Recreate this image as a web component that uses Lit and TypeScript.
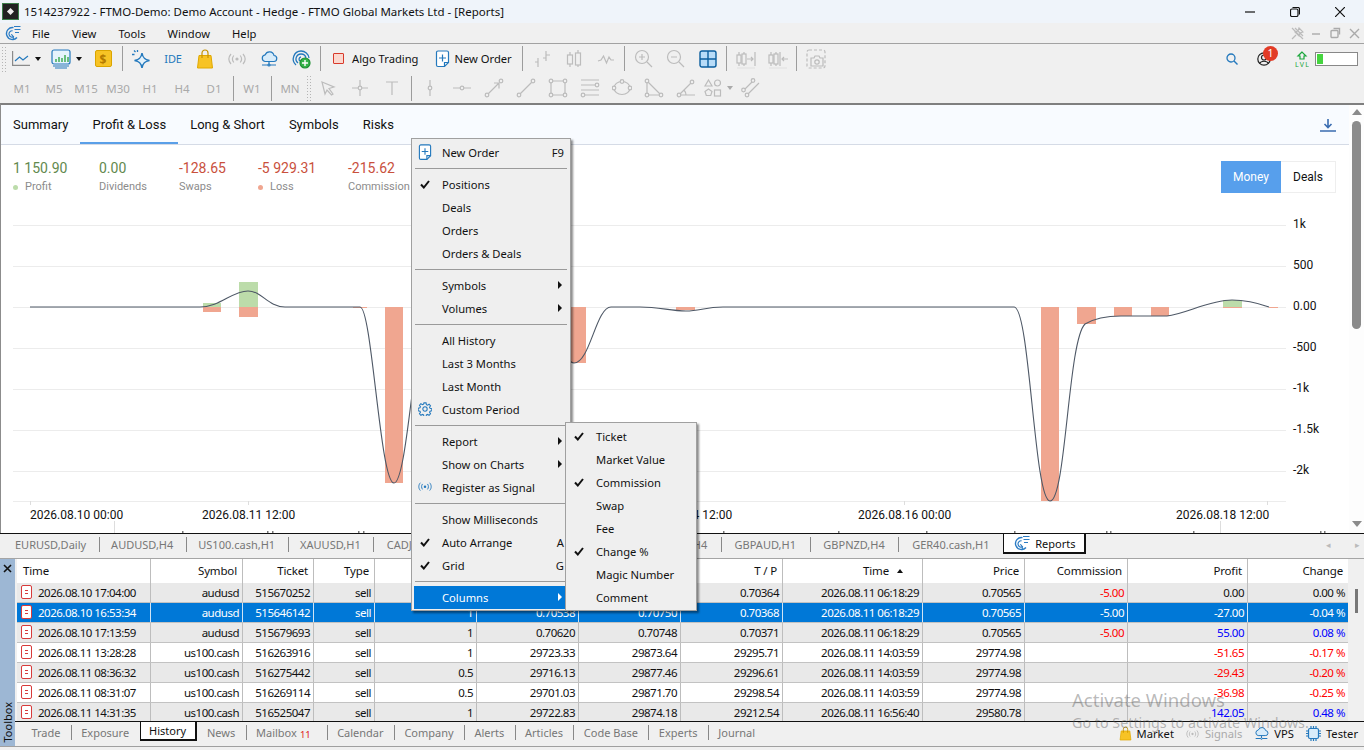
import { LitElement, css, html, svg } from "lit";
import { customElement } from "lit/decorators.js";

const BLUE = "#2479bd";
const GREY = "#bcbcbc";

const ico = (w: number, h: number, body: unknown) =>
  html`<svg width=${w} height=${h} viewBox="0 0 ${w} ${h}" fill="none" stroke-width="1.2">${body}</svg>`;

const logo = (s: number) => html`<svg width=${s} height=${s} viewBox="0 0 16 16" fill="none" stroke="#2b7cc4" stroke-width="1.4">
  <path d="M8.5 2.6A6 6 0 1 0 12 12.5"/><path d="M7.6 5.8A3.2 3.2 0 1 0 9 11.6" stroke-width="1.2"/>
  <path d="M6 9.5c2 .5 3 3 2 5.5" stroke-width="1.1"/><path d="M9 1.5h6.5M9.5 4.5h6M10 7.5h4" stroke-width="1.2"/></svg>`;

const newOrder = ico(15, 18, svg`<path d="M1.5 2.5a1.5 1.5 0 0 1 1.5-1.5h9a1.500 1.500 0 0 1 1.500 1.500v10l-4 4H3a1.500 1.500 0 0 1-1.500-1.500z" stroke=${BLUE} fill="#fff"/><path d="M9.500 16.500v-4h4" stroke=${BLUE}/><path d="M7.500 4.500v7M4 8h7" stroke=${BLUE}/>`);
const signal = (c: string) => ico(18, 12, svg`<circle cx="9" cy="6" r="1.600" fill=${c}/><path d="M5.800 2.500c-1.600 2-1.600 5 0 7M12.200 2.500c1.600 2 1.600 5 0 7M3 1c-2.600 3-2.600 7 0 10M15 1c2.600 3 2.600 7 0 10" stroke=${c}/>`);
const bag = (w: number, h: number) => html`<svg width=${w} height=${h} viewBox="0 0 18 20" fill="none"><path d="M3 6.500h12l1.500 12.500h-15z" fill="#f7c325" stroke="#e0a800"/><path d="M6 9V4a3 3 0 0 1 6 0v5" stroke="#c79200" stroke-width="1.200"/></svg>`;
const cloud = (w: number, h: number) => html`<svg width=${w} height=${h} viewBox="0 0 18 18" fill="none" stroke=${BLUE} stroke-width="1.200"><path d="M5 11.500h8.500a3 3 0 0 0 .5-6 4.600 4.600 0 0 0-8.800-.7A3.400 3.400 0 0 0 5 11.500z" fill="#d8ecfa"/><path d="M9 11.500v3.500M2 15h14"/><circle cx="9" cy="15" r="1" fill="#fff"/></svg>`;

const tb1: Record<string, unknown> = {
  spark: ico(20, 20, svg`<path d="M11 4c.8 5 2.700 6.800 7.500 7.500-4.800.7-6.700 2.500-7.500 7.500-.8-5-2.700-6.800-7.500-7.500C8.300 10.800 10.200 9 11 4z" stroke=${BLUE} stroke-width="1.500" fill="#e4f2fb"/><path d="M3 1.500l1.500 1.500M1 5.500h2.500M6.500 1v2" stroke=${BLUE} stroke-width="1.300"/>`),
  bag: bag(18, 20),
  radar: ico(20, 20, svg`<path d="M10 2a8 8 0 0 0-5 14M10 5a5 5 0 0 0-3 9M10 8a2.200 2.200 0 0 0-1 4" stroke=${BLUE} stroke-width="1.300"/><path d="M10 2a8 8 0 0 1 8 7M10 5a5 5 0 0 1 5 4" stroke=${BLUE} stroke-width="1.300"/><circle cx="14" cy="14" r="5" fill="#35b34a" stroke="#1e8f33"/><path d="M14 11v6M11 14h6" stroke="#fff" stroke-width="1.400"/>`),
  bars: ico(18, 18, svg`<path d="M5 8v9M2 12h3M13 1v10M13 5h4M10 8h3" stroke=${GREY}/>`),
  candles: ico(18, 20, svg`<path d="M5 3v15M13 1v17" stroke=${GREY}/><rect x="2.500" y="6" width="5" height="9" fill="#f0f0f0" stroke=${GREY}/><rect x="10.500" y="4" width="5" height="12" fill="#f0f0f0" stroke=${GREY}/>`),
  wave: ico(18, 12, svg`<path d="M1 8l3-1 2.500-4 3 7 2.500-6 2 3 3 0" stroke=${GREY}/>`),
  zoomIn: ico(19, 19, svg`<circle cx="8" cy="8" r="6.500" stroke=${GREY}/><path d="M8 5v6M5 8h6M13 13l5 5" stroke=${GREY}/>`),
  zoomOut: ico(19, 19, svg`<circle cx="8" cy="8" r="6.500" stroke=${GREY}/><path d="M5 8h6M13 13l5 5" stroke=${GREY}/>`),
  grid: ico(18, 18, svg`<rect x="1" y="1" width="16" height="16" rx="2" fill="#b8dcf8" stroke="#0b5e9e" stroke-width="1.400"/><path d="M9 1v16M1 9h16" stroke="#0b5e9e" stroke-width="1.400"/>`),
  shiftR: ico(20, 20, svg`<path d="M3 3v14M8 3v14" stroke=${GREY}/><rect x="1" y="6" width="4" height="8" fill="#f0f0f0" stroke=${GREY}/><rect x="6" y="5" width="4" height="10" fill="#f0f0f0" stroke=${GREY}/><path d="M11 10h6M15 8l2 2-2 2M19 3v14" stroke=${GREY}/><path d="M1 19h18" stroke="#e2e2e2"/>`),
  shiftL: ico(20, 20, svg`<path d="M3 3v14M8 3v14" stroke=${GREY}/><rect x="1" y="6" width="4" height="8" fill="#f0f0f0" stroke=${GREY}/><rect x="6" y="5" width="4" height="10" fill="#f0f0f0" stroke=${GREY}/><path d="M12 3v14M14 10h6M16 8l-2 2 2 2" stroke=${GREY}/><path d="M1 19h18" stroke="#e2e2e2"/>`),
  camera: ico(20, 20, svg`<rect x="1" y="1" width="18" height="18" rx="2" stroke=${GREY} stroke-dasharray="3 2"/><path d="M6 9h2l1-2h4l1 2h3v8H5V9z" fill="#f0f0f0" stroke=${GREY}/><circle cx="11" cy="13" r="2.200" stroke=${GREY}/>`),
};

const tb2: Record<string, unknown> = {
  cursor: ico(16, 16, svg`<path d="M2 2l12 5-5 1.500L13 14l-1.500 1L7 10l-2 4z" stroke=${GREY}/>`),
  cross: ico(18, 18, svg`<circle cx="9" cy="9" r="1.800" stroke=${GREY}/><path d="M9 1v6M9 11v6M1 9h6M11 9h6" stroke=${GREY}/>`),
  text: ico(14, 16, svg`<path d="M1 2h12M7 2v13" stroke=${GREY}/>`),
  vline: ico(8, 18, svg`<circle cx="4" cy="9" r="1.800" stroke=${GREY}/><path d="M4 1v6M4 11v6" stroke=${GREY}/>`),
  hline: ico(18, 8, svg`<circle cx="9" cy="4" r="1.800" stroke=${GREY}/><path d="M0 4h7M11 4h7" stroke=${GREY}/>`),
  arrow: ico(20, 20, svg`<circle cx="3" cy="17" r="1.800" stroke=${GREY}/><circle cx="17" cy="3" r="1.800" stroke=${GREY}/><path d="M4.500 15.500L15 5M10 5h5.500M15 5v5.500" stroke=${GREY}/>`),
  line: ico(20, 20, svg`<circle cx="3" cy="17" r="1.800" stroke=${GREY}/><circle cx="17" cy="3" r="1.800" stroke=${GREY}/><path d="M4.500 15.500L15.500 4.500" stroke=${GREY}/>`),
  rect: ico(20, 20, svg`<path d="M3 3h14v14H3z" stroke=${GREY}/><g fill="#f0f0f0" stroke=${GREY}><circle cx="3" cy="3" r="1.800"/><circle cx="17" cy="3" r="1.800"/><circle cx="3" cy="17" r="1.800"/><circle cx="17" cy="17" r="1.800"/></g>`),
  channel: ico(20, 20, svg`<path d="M1 2h18M1 7h14M1 12h18M5 17h14" stroke=${GREY}/><circle cx="17" cy="7" r="1.800" stroke=${GREY}/><circle cx="3" cy="17" r="1.800" stroke=${GREY}/>`),
  ellipse: ico(20, 18, svg`<ellipse cx="10" cy="9" rx="8" ry="6.500" stroke=${GREY}/><g fill="#f0f0f0" stroke=${GREY}><circle cx="10" cy="2.500" r="1.800"/><circle cx="2" cy="9" r="1.800"/><circle cx="18" cy="9" r="1.800"/></g>`),
  tri: ico(20, 20, svg`<path d="M3 3l14 14H3z" stroke=${GREY}/><g fill="#f0f0f0" stroke=${GREY}><circle cx="3" cy="3" r="1.800"/><circle cx="3" cy="17" r="1.800"/><circle cx="17" cy="17" r="1.800"/></g>`),
  angle: ico(20, 20, svg`<path d="M3 17L16 4M3 17h16M10 17c0-2-.7-3.500-2-5" stroke=${GREY}/><circle cx="3" cy="17" r="1.800" fill="#f0f0f0" stroke=${GREY}/><circle cx="16" cy="4" r="1.800" fill="#f0f0f0" stroke=${GREY}/>`),
  shapes: html`<span class="combo">${ico(18, 18, svg`<path d="M4.500 1l3.500 6H1z" stroke=${GREY}/><circle cx="13.500" cy="4" r="3" stroke=${GREY}/><path d="M4.500 10l3.500 2.500-1.300 4H2.300L1 12.500z" stroke=${GREY}/><rect x="10.500" y="11" width="6" height="6" stroke=${GREY}/>`)}<i class="caret dim"></i></span>`,
  parallel: ico(20, 20, svg`<path d="M4 12L14 2M7 17l12-12" stroke=${GREY}/><circle cx="3.500" cy="12" r="1.800" fill="#f0f0f0" stroke=${GREY}/><circle cx="13" cy="2.500" r="1.800" fill="#f0f0f0" stroke=${GREY}/><circle cx="7" cy="17" r="1.800" fill="#f0f0f0" stroke=${GREY}/>`),
};

const check = html`<svg class="chk" width="10" height="9" viewBox="0 0 10 9" fill="none"><path d="M1 4.500l2.800 3L9 1" stroke="#111" stroke-width="2"/></svg>`;

type MenuItem = { t: string; chk?: boolean; sub?: boolean; key?: string; icon?: unknown; active?: boolean } | null;

const gear = ico(16, 16, svg`<circle cx="8" cy="8" r="2.500" stroke=${BLUE}/><path d="M6.800 1h2.400l.4 2 1.300.6 1.800-1 1.600 1.700-1.100 1.700.6 1.300 2 .4v2.400l-2 .4-.6 1.300 1.100 1.700-1.600 1.700-1.800-1-1.300.6-.4 2H6.800l-.4-2-1.300-.6-1.800 1-1.600-1.700 1.100-1.700-.6-1.300-2-.4V7.100l2-.4.6-1.300-1.100-1.700 1.600-1.700 1.800 1 1.300-.6z" stroke=${BLUE}/>`);

const mainMenu: MenuItem[] = [
  { t: "New Order", key: "F9", icon: newOrder }, null,
  { t: "Positions", chk: true }, { t: "Deals" }, { t: "Orders" }, { t: "Orders & Deals" }, null,
  { t: "Symbols", sub: true }, { t: "Volumes", sub: true }, null,
  { t: "All History" }, { t: "Last 3 Months" }, { t: "Last Month" }, { t: "Custom Period", icon: gear }, null,
  { t: "Report", sub: true }, { t: "Show on Charts", sub: true }, { t: "Register as Signal", icon: signal(BLUE) }, null,
  { t: "Show Milliseconds" }, { t: "Auto Arrange", chk: true, key: "A" }, { t: "Grid", chk: true, key: "G" }, null,
  { t: "Columns", sub: true, active: true },
];

const subMenu: MenuItem[] = [
  { t: "Ticket", chk: true }, { t: "Market Value" }, { t: "Commission", chk: true }, { t: "Swap" },
  { t: "Fee" }, { t: "Change %", chk: true }, { t: "Magic Number" }, { t: "Comment" },
];

const header = ["Time", "Symbol", "Ticket", "Type", "Volume", "Price", "S / L", "T / P", "Time", "Price", "Commission", "Profit", "Change"];

type Row = { cells: string[]; tone?: string };
const rows: Row[] = [
  { cells: ["2026.08.10 17:04:00", "audusd", "515670252", "sell", "1", "0.70628", "0.70750", "0.70364", "2026.08.11 06:18:29", "0.70565", "-5.00", "0.00", "0.00 %"] },
  { cells: ["2026.08.10 16:53:34", "audusd", "515646142", "sell", "1", "0.70538", "0.70750", "0.70368", "2026.08.11 06:18:29", "0.70565", "-5.00", "-27.00", "-0.04 %"] },
  { cells: ["2026.08.10 17:13:59", "audusd", "515679693", "sell", "1", "0.70620", "0.70748", "0.70371", "2026.08.11 06:18:29", "0.70565", "-5.00", "55.00", "0.08 %"], tone: "pos" },
  { cells: ["2026.08.11 13:28:28", "us100.cash", "516263916", "sell", "1", "29723.33", "29873.64", "29295.71", "2026.08.11 14:03:59", "29774.98", "", "-51.65", "-0.17 %"], tone: "neg" },
  { cells: ["2026.08.11 08:36:32", "us100.cash", "516275442", "sell", "0.5", "29716.13", "29877.46", "29296.61", "2026.08.11 14:03:59", "29774.98", "", "-29.43", "-0.20 %"], tone: "neg" },
  { cells: ["2026.08.11 08:31:07", "us100.cash", "516269114", "sell", "0.5", "29701.03", "29871.70", "29298.54", "2026.08.11 14:03:59", "29774.98", "", "-36.98", "-0.25 %"], tone: "neg" },
  { cells: ["2026.08.11 14:31:35", "us100.cash", "516525047", "sell", "1", "29722.83", "29874.18", "29212.54", "2026.08.11 16:56:40", "29580.78", "", "142.05", "0.48 %"], tone: "pos" },
];

// bars in page coordinates: x, width, top of green, bottom of red
const bars = [
  [203, 18, 303, 312], [239, 19, 282, 317], [353, 14, 307, 308], [385, 18, 307, 483], [567, 19, 307, 363],
  [676, 19, 307, 310], [1041, 18, 307, 501], [1077, 19, 307, 324], [1114, 18, 307, 316], [1151, 18, 307, 316],
  [1223, 19, 300, 308], [1269, 9, 307, 308],
];

const gridY: [number, string][] = [[225, "1k"], [266, "500"], [307, "0.00"], [348, "-500"], [389, "-1k"], [430, "-1.5k"], [471, "-2k"]];
const xLabels: [number, string][] = [[30, "2026.08.10 00:00"], [202, "2026.08.11 12:00"], [530, "2026.08.13 00:00"], [639, "2026.08.14 12:00"], [858, "2026.08.16 00:00"], [1176, "2026.08.18 12:00"]];
const clipped = [182, 267, 272, 358, 363, 723, 838, 926, 1014, 1106, 1110, 1193, 1320, 1324];

const LINE = "M30 307L200 307C220 307 232 291 248 291C262 291 268 307 285 307L360 307C372 307 380 483 394 483C402 483 408 425 412 395L560 340C566 358 570 363 574 363C590 363 596 307 611 307L640 307C660 307 670 311 686 311C700 311 705 307 723 307L1014 307C1030 307 1034 501 1050 501C1066 501 1068 340 1085 324C1095 318 1105 316 1121 316L1167 316C1185 314 1210 300 1232 300C1245 300 1255 302 1269 307";

const chartTabs = ["EURUSD,Daily", "AUDUSD,H4", "US100.cash,H1", "XAUUSD,H1", "CADJPY,H1", "NZDUSD,H1", "USDCAD,H1", "GBPCAD,H4", "GBPAUD,H1", "GBPNZD,H4", "GER40.cash,H1"];
const toolTabs = ["Trade", "Exposure", "History", "News", "Mailbox", "Calendar", "Company", "Alerts", "Articles", "Code Base", "Experts", "Journal"];

@customElement("app-root")
export class AppRoot extends LitElement {
  static styles = css`
    :host {
      display: flex;
      flex-direction: column;
      position: relative;
      width: 1364px;
      height: 750px;
      overflow: hidden;
      background: #f0f0f0;
      font-family: "Noto Sans", sans-serif;
      font-size: 11.2px;
      color: #111;
    }
    svg { display: block; flex: none; }

    .title { height: 23px; background: #eff4fa; display: flex; align-items: center; padding-left: 2px; font-size: 11.5px; flex: none; }
    .title .app { width: 15px; height: 15px; background: #222; border: 1px solid #3c7d4a; display: grid; place-items: center; margin-right: 5px; }
    .title .app i { width: 5px; height: 5px; background: #eee; transform: rotate(45deg); }
    .winbtns { margin-left: auto; display: flex; gap: 35px; padding-right: 19px; align-items: center; }

    .menubar { height: 21px; box-sizing: border-box; flex: none; display: flex; align-items: center; border-bottom: 1px solid #a2a2a2; padding-left: 5px; }
    .menubar span { margin: 0 11px; }
    .menubar .mdi { margin-left: auto; display: flex; gap: 6px; padding-right: 3px; align-items: center; }

    .toolrow { height: 29.5px; flex: none; display: flex; align-items: center; padding-left: 1px; }
    .grip { width: 6px; height: 26px; flex: none; background-image: radial-gradient(#b5b5b5 0.7px, transparent 0.8px); background-size: 3px 3px; }
    .sep { width: 6px; height: 25px; flex: none; display: flex; justify-content: center; }
    .sep::after { content: ""; width: 1px; background: #9c9c9c; }
    .b { width: 32px; height: 26px; flex: none; display: flex; align-items: center; justify-content: center; }
    .combo { display: flex; align-items: center; gap: 5px; }
    .c1 { width: 38px; }
    .c2 { width: 42px; }
    .caret { display: block; width: 0; height: 0; border-left: 3.5px solid transparent; border-right: 3.5px solid transparent; border-top: 4px solid #111; }
    .caret.dim { border-top-color: #aaa; }
    .ide { color: #2479bd; font-size: 11px; letter-spacing: -0.2px; }
    .dollar { width: 17px; height: 17px; background: #f7c325; border: 1px solid #dba500; border-radius: 2px; display: grid; place-items: center; color: #b47a00; font-weight: 700; font-size: 12px; box-sizing: border-box; }
    .labeled { display: flex; align-items: center; padding: 0 8px; gap: 5px; height: 26px; flex: none; }
    .algo { width: 11px; height: 11px; background: #fbd8cf; border: 1px solid #d8392b; box-sizing: border-box; border-radius: 1px; flex: none; }
    .labeled.algo-btn { padding-left: 10px; gap: 8px; }
    .right { margin-left: auto; display: flex; align-items: center; padding-right: 6px; }
    .userwrap { position: relative; margin: 0 24px 0 19px; }
    .badge { position: absolute; left: 6px; top: -6px; width: 15px; height: 15px; border-radius: 50%; background: #e23b26; color: #fff; font-size: 10.5px; text-align: center; line-height: 15px; }
    .gauge { width: 40px; height: 12px; border: 1px solid #888; background: #fff; margin-left: 6px; padding: 0 0 0 1px; box-sizing: content-box; }
    .gauge i { display: block; width: 6px; height: 10px; margin-top: 1px; background: #45d43f; }
    .tf { color: #a9a9a9; font-size: 11.5px; }
    .first-tf { margin-left: 5px; }

    .content { flex: none; height: 430px; box-sizing: border-box; display: flex; background: #fff; border-top: 2px solid #7f7f7f; border-left: 1px solid #8c8c8c; }
    .report { width: 1348px; display: flex; flex-direction: column; font-family: Roboto, sans-serif; }
    .tabs { height: 39px; background: #f8fbff; border-bottom: 1px solid #d5dbe6; display: flex; align-items: stretch; font-size: 13px; box-sizing: content-box; flex: none; }
    .tab { padding: 0 12px; display: flex; align-items: center; }
    .tab.on { box-shadow: inset 0 -2px 0 #5a9fe8; }
    .dl { margin-left: auto; align-self: center; margin-right: 13px; }
    .stats { height: 55px; flex: none; display: flex; padding: 14px 13px 0 12px; box-sizing: border-box; }
    .stat { display: flex; flex-direction: column; gap: 3px; }
    .w-profit { width: 86px; }
    .w-div { width: 80px; }
    .w-swap { width: 79px; }
    .w-loss { width: 90px; }
    .stat b { font-weight: 400; font-size: 14px; line-height: 18px; }
    .stat small { font-size: 11px; color: #8b8b8b; display: flex; align-items: center; gap: 7px; line-height: 14px; }
    .stat small i { width: 5px; height: 5px; border-radius: 50%; }
    .dot-g { background: #bcdcaa; }
    .dot-r { background: #f0a690; }
    .green { color: #62894e; }
    .red { color: #c9503c; }
    .toggle { margin-left: auto; margin-top: 2px; display: flex; height: 32px; font-size: 12px; }
    .toggle span { display: grid; place-items: center; box-sizing: border-box; }
    .toggle .m { width: 60px; background: #579fec; color: #fff; }
    .toggle .d { width: 55px; border: 1px solid #eee; border-left: 0; }
    .scroll { flex: 1; display: flex; flex-direction: column; align-items: center; padding-top: 4px; background: #fdfdfd; }
    .scroll .thumb { width: 9px; height: 208px; margin-top: 6px; background: #8b8b8b; border-radius: 5px; }
    .up, .down { width: 0; height: 0; border-left: 5px solid transparent; border-right: 5px solid transparent; }
    .up { border-bottom: 6px solid #8b8b8b; }
    .down { border-top: 6px solid #8b8b8b; margin-top: auto; margin-bottom: 6px; }
    .chart text { font-family: Roboto, sans-serif; font-size: 12px; fill: #111; }

    .strip { display: flex; align-items: flex-start; border-top: 1px solid #111; color: #777; flex: none; font-size: 11px; box-sizing: border-box; }
    .strip .it { display: flex; align-items: center; height: 20px; padding: 0 12.5px; position: relative; white-space: nowrap; }
    .strip .it + .it::before { content: ""; position: absolute; left: 0; top: 3px; bottom: 2px; width: 1px; background: #888; }
    .strip .it.on { background: #fff; color: #111; border: 1px solid #111; border-top: 0; border-right-width: 2px; border-bottom-width: 2px; box-sizing: border-box; }
    .strip .it.on::before, .strip .it.on + .it::before { display: none; }
    .charttabs { height: 26px; border-bottom: 1px solid #a5a5a5; padding-left: 2.5px; }
    .charttabs .it:nth-child(n+5) { padding: 0 13.7px; }
    .charttabs .it.on { padding: 0 10px; gap: 5px; width: 83px; }
    .nav { margin-left: auto; display: flex; gap: 24px; align-items: center; height: 20px; padding-right: 4px; color: #bbb; font-size: 9px; }

    .dock { flex: none; height: 188px; box-sizing: border-box; display: flex; border-bottom: 1px solid #a0a0a0; }
    .toolbox { width: 15px; background: #9db7d4; display: flex; flex-direction: column; align-items: center; justify-content: space-between; padding: 5px 0 3px; box-sizing: border-box; flex: none; }
    .toolbox span { writing-mode: vertical-rl; transform: rotate(180deg); font-size: 11px; color: #111; }
    .dockmain { flex: 1; display: flex; flex-direction: column; min-width: 0; }
    .tablewrap { height: 162px; display: flex; padding-left: 2px; flex: none; }
    .table { width: 1331px; height: 162px; overflow: hidden; background: #fff; }
    .row { display: grid; grid-template-columns: 134px 92px 71px 61px 102px 102px 102px 102px 140px 102px 103px 120px 101px; height: 20px; box-sizing: border-box; border-bottom: 1px solid #c2c2c2; background: #fff; }
    .row:nth-child(even) { background: #e9e9e9; }
    .row.head { height: 24px; background: #fff; border-bottom: 0; }
    .row.head .cell { padding-right: 5px; font-size: 11.5px; letter-spacing: -0.15px; }
    .row.sel { background: #0078d7; color: #fff; }
    .cell { display: flex; align-items: center; justify-content: flex-end; padding-right: 3px; padding-bottom: 1px; border-right: 1px solid #bdbdbd; font-size: 11.5px; letter-spacing: -0.5px; white-space: nowrap; min-width: 0; overflow: hidden; }
    .row.sel .cell { border-right-color: #d0e4f5; }
    .cell.first { justify-content: flex-start; padding-left: 4px; gap: 6px; }
    .row.head .cell.first { padding-left: 6px; }
    .cell.sorted { gap: 8px; }
    .sortup { width: 0; height: 0; border-left: 3.5px solid transparent; border-right: 3.5px solid transparent; border-bottom: 4px solid #111; }
    .sortgap { width: 6px; }
    .doc { width: 11px; height: 14px; box-sizing: border-box; border: 1px solid #d83a3a; border-radius: 2px; background: #fff; display: flex; flex-direction: column; align-items: center; justify-content: center; gap: 2px; flex: none; }
    .doc i { width: 3px; height: 1px; background: #d83a3a; }
    .pos .t-p { color: #0000ff; }
    .neg .t-p { color: #ff0000; }
    .t-c { color: #ff0000; }
    .row.sel .t-c, .row.sel .t-p { color: #fff; }
    .tscroll { flex: 1; }
    .tscroll i { display: block; width: 3px; height: 24px; background: #777; margin: 30px 0 0 7px; }

    .tooltabs { height: 25px; padding-left: 6px; }
    .tooltabs .it { padding: 0 10.4px; }
    .tooltabs .it.on { height: 19px; padding: 0 8.5px; }
    .mail { color: #e02020; font-size: 9.5px; margin: 4px 0 0 3px; align-self: center; }
    .tooltabs .it:has(.mail) { padding-right: 16px; }
    .status { margin-left: auto; display: flex; align-items: center; height: 23px; color: #111; font-size: 11.2px; }
    .status span { display: flex; align-items: center; gap: 5px; margin-right: 12px; }
    .status span:first-child { margin-right: 12px; }
    .status span:last-child { margin-right: 6px; }
    .status .off { color: #aaa; gap: 6px; }
    .status .off svg { width: 13px; }
    .bottom { flex: 1; }

    .menu { position: absolute; background: #efefef; border: 1px solid #a0a0a0; box-shadow: 2px 2px 2px rgba(0,0,0,0.45); padding: 2px; box-sizing: border-box; font-size: 11.2px; }
    .menu.main { left: 411px; top: 138px; width: 160px; height: 473px; }
    .menu.sub { left: 565px; top: 422px; width: 132px; height: 189px; }
    .mi { height: 23px; box-sizing: border-box; padding-bottom: 1px; display: flex; align-items: center; }
    .mi .mark { width: 22px; margin-right: 6px; flex: none; display: flex; justify-content: center; }
    .mi .mark svg { max-width: 14px; height: auto; }
    .mi .lbl { flex: 1; }
    .mi .key { margin-right: 4px; }
    .mi .arr { width: 0; height: 0; border-top: 4px solid transparent; border-bottom: 4px solid transparent; border-left: 4px solid #111; margin-right: 6px; }
    .mi.act { background: #0078d7; color: #fff; }
    .mi.act .arr { border-left-color: #fff; }
    .ms { height: 9px; display: flex; align-items: center; padding: 0 1px; }
    .ms::after { content: ""; flex: 1; height: 1px; background: #9a9a9a; }

    .wm { position: absolute; left: 1072px; top: 688px; color: rgba(90,90,90,0.42); pointer-events: none; }
    .wm b { display: block; font-weight: 400; font-size: 18.5px; line-height: 24px; }
    .wm span { display: block; font-size: 14.3px; line-height: 22px; }
  `;

  private menuItems(items: MenuItem[]) {
    return items.map((m) =>
      m === null
        ? html`<div class="ms"></div>`
        : html`<div class="mi ${m.active ? "act" : ""}">
            <span class="mark">${m.chk ? check : m.icon ?? ""}</span>
            <span class="lbl">${m.t}</span>
            ${m.key ? html`<span class="key">${m.key}</span>` : ""}
            ${m.sub ? html`<i class="arr"></i>` : ""}
          </div>`
    );
  }

  private toolbars() {
    const b = (x: unknown) => html`<div class="b">${x}</div>`;
    const sep = html`<div class="sep"></div>`;
    const tf = (t: string) => html`<div class="b tf">${t}</div>`;
    return html`
      <div class="toolrow">
        <div class="grip"></div>
        <div class="b c1"><span class="combo">${ico(18, 15, svg`<path d="M.6 0v14.400H18" stroke="#8a8a8a"/><path d="M3 10l4.500-4 3.500 3 5-4" stroke=${BLUE}/>`)}<i class="caret"></i></span></div>
        <div class="b c2"><span class="combo">${ico(20, 20, svg`<rect x="1" y="1" width="18" height="14" rx="2" fill="#e6f3fc" stroke=${BLUE}/><path d="M2 17h16M4 19h12" stroke=${BLUE}/><path d="M5 13v-3M8 13V8M11 13v-4M14 13V6M17 13V8" stroke="#35a84a" stroke-width="1.400"/>`)}<i class="caret"></i></span></div>
        ${b(html`<div class="dollar">$</div>`)}
        ${sep}
        ${b(tb1.spark)}
        <div class="b ide">IDE</div>
        ${b(tb1.bag)}
        ${b(signal(GREY))}
        ${b(cloud(18, 18))}
        ${b(tb1.radar)}
        ${sep}
        <div class="labeled algo-btn"><i class="algo"></i><span>Algo Trading</span></div>
        <div class="labeled">${newOrder}<span>New Order</span></div>
        ${sep}
        ${b(tb1.bars)}${b(tb1.candles)}${b(tb1.wave)}
        ${sep}
        ${b(tb1.zoomIn)}${b(tb1.zoomOut)}${b(tb1.grid)}
        ${sep}
        ${b(tb1.shiftR)}${b(tb1.shiftL)}
        ${sep}
        ${b(tb1.camera)}
        <div class="right">
          ${ico(12, 12, svg`<circle cx="5" cy="5" r="4" stroke=${BLUE} stroke-width="1.300"/><path d="M8 8l3.500 3.500" stroke=${BLUE} stroke-width="1.400"/>`)}
          <div class="userwrap">
            ${ico(14, 14, svg`<circle cx="7" cy="7" r="6.200" stroke="#222"/><circle cx="7" cy="5.500" r="2.500" stroke="#222"/><path d="M2.500 11.500c1.500-3 7.500-3 9 0" stroke="#222"/>`)}
            <span class="badge">1</span>
          </div>
          <svg width="14" height="16" viewBox="0 0 14 16" fill="none"><path d="M7 1L3 5h2v3h4V5h2z" stroke="#19a63a" stroke-width="1.200"/><text x="0" y="15.500" font-size="7" font-family="Noto Sans" fill="#19a63a" textLength="14">LVL</text></svg>
          <div class="gauge"><i></i></div>
        </div>
      </div>
      <div class="toolrow">
        <div class="b tf first-tf">M1</div>${tf("M5")}${tf("M15")}${tf("M30")}${tf("H1")}${tf("H4")}${tf("D1")}
        ${sep}${tf("W1")}${sep}${tf("MN")}
        <div class="grip"></div>
        ${b(tb2.cursor)}${b(tb2.cross)}${b(tb2.text)}
        ${sep}
        ${b(tb2.vline)}${b(tb2.hline)}${b(tb2.arrow)}${b(tb2.line)}${b(tb2.rect)}${b(tb2.channel)}${b(tb2.ellipse)}${b(tb2.tri)}${b(tb2.angle)}${b(tb2.shapes)}${b(tb2.parallel)}
      </div>`;
  }

  private chart() {
    return html`<svg class="chart" width="1348" height="333" viewBox="1 200 1348 333">
      ${gridY.map(([y]) => svg`<path d="M13 ${y + 0.5}H1286" stroke="#ececec"/>`)}
      <path d="M13 501.5H1286" stroke="#ececec"/>
      ${gridY.map(([y, t]) => svg`<text x="1293" y=${y + 3}>${t}</text>`)}
      ${bars.map(([x, w, top, bot]) => svg`
        <rect x=${x} y="307" width=${w} height=${bot - 307} fill="#f0a690"/>
        ${top < 307 ? svg`<rect x=${x} y=${top} width=${w} height=${307 - top} fill="#bcdcaa"/>` : ""}`)}
      <path d=${LINE} stroke="#4e5866" stroke-width="1.1" fill="none"/>
      ${[30, 248, 904, 1267].map((x) => svg`<path d="M${x + 0.5} 501V505" stroke="#ddd"/>`)}
      ${[114, 1220].map((x) => svg`<path d="M${x + 0.5} 521V533" stroke="#ddd"/>`)}
      ${xLabels.map(([x, t]) => svg`<text x=${x} y="519">${t}</text>`)}
      ${clipped.map((x) => svg`<rect x=${x} y="531" width="1.5" height="2" fill="#777"/>`)}
    </svg>`;
  }

  private table() {
    return html`<div class="table">
      <div class="row head">
        ${header.map((h, i) => html`<div class="cell ${i === 0 ? "first" : ""} ${i === 8 ? "sorted" : ""}">${h}${i === 8 ? html`<i class="sortup"></i><span class="sortgap"></span>` : ""}</div>`)}
      </div>
      ${rows.map((r, ri) => html`<div class="row ${r.tone ?? ""} ${ri === 1 ? "sel" : ""}">
        ${r.cells.map((c, i) => html`<div class="cell ${i === 0 ? "first" : ""} ${i === 10 ? "t-c" : ""} ${i >= 11 ? "t-p" : ""}">${i === 0 ? html`<span class="doc"><i></i><i></i></span>` : ""}${c}</div>`)}
      </div>`)}
    </div>`;
  }

  render() {
    return html`
      <div class="title">
        <div class="app"><i></i></div>
        <span>1514237922 - FTMO-Demo: Demo Account - Hedge - FTMO Global Markets Ltd - [Reports]</span>
        <div class="winbtns">
          ${ico(10, 10, svg`<path d="M0 5h10" stroke="#111"/>`)}
          ${ico(10, 10, svg`<rect x=".5" y="2" width="7.5" height="7.5" rx="1.5" stroke="#111"/><path d="M2.500 .5h5.500a1.500 1.500 0 0 1 1.500 1.500v5.500" stroke="#111"/>`)}
          ${ico(10, 10, svg`<path d="M0 0l10 10M10 0L0 10" stroke="#111"/>`)}
        </div>
      </div>
      <div class="menubar">
        ${logo(16)}
        <span>File</span><span>View</span><span>Tools</span><span>Window</span><span>Help</span>
        <div class="mdi">
          ${ico(13, 13, svg`<path d="M4 1l8 8M8 1l4 4-3 1-1 3-4-4 3-1zM5 8l-4 4M1 1l11 11" stroke="#bbb"/>`)}
          ${ico(13, 13, svg`<path d="M2 7h8" stroke="#aaa" stroke-width="1.4"/>`)}
          ${ico(13, 13, svg`<rect x="2" y="3.5" width="7" height="7" rx="1" stroke="#aaa" stroke-width="1.4"/><path d="M4.500 1.500h6v6" stroke="#aaa" stroke-width="1.4"/>`)}
          ${ico(13, 13, svg`<path d="M2 2l9 9M11 2l-9 9" stroke="#aaa" stroke-width="1.4"/>`)}
        </div>
      </div>
      ${this.toolbars()}
      <div class="content">
        <div class="report">
          <div class="tabs">
            <div class="tab">Summary</div><div class="tab on">Profit &amp; Loss</div><div class="tab">Long &amp; Short</div><div class="tab">Symbols</div><div class="tab">Risks</div>
            <div class="dl">${ico(16, 14, svg`<path d="M8 1v8M4.500 6L8 9.500 11.500 6M0 13h16" stroke="#3a6cb0" stroke-width="1.6"/>`)}</div>
          </div>
          <div class="stats">
            <div class="stat w-profit"><b class="green">1 150.90</b><small><i class="dot-g"></i>Profit</small></div>
            <div class="stat w-div"><b class="green">0.00</b><small>Dividends</small></div>
            <div class="stat w-swap"><b class="red">-128.65</b><small>Swaps</small></div>
            <div class="stat w-loss"><b class="red">-5 929.31</b><small><i class="dot-r"></i>Loss</small></div>
            <div class="stat"><b class="red">-215.62</b><small>Commission</small></div>
            <div class="toggle"><span class="m">Money</span><span class="d">Deals</span></div>
          </div>
          ${this.chart()}
        </div>
        <div class="scroll"><i class="up"></i><i class="thumb"></i><i class="down"></i></div>
      </div>
      <div class="strip charttabs">
        ${chartTabs.map((t) => html`<div class="it">${t}</div>`)}
        <div class="it on">${logo(16)}<span>Reports</span></div>
        <div class="nav"><span>◂</span><span>▸</span></div>
      </div>
      <div class="dock">
        <div class="toolbox">
          ${ico(9, 9, svg`<path d="M1 1l7 7M8 1L1 8" stroke="#111" stroke-width="1.6"/>`)}
          <span>Toolbox</span>
        </div>
        <div class="dockmain">
          <div class="tablewrap">${this.table()}<div class="tscroll"><i></i></div></div>
          <div class="strip tooltabs">
            ${toolTabs.map((t) => html`<div class="it ${t === "History" ? "on" : ""}">${t}${t === "Mailbox" ? html`<span class="mail">11</span>` : ""}</div>`)}
            <div class="status">
              <span>${bag(13, 15)}Market</span>
              <span class="off">${signal("#bbb")}Signals</span>
              <span>${cloud(15, 15)}VPS</span>
              <span>${ico(15, 15, svg`<rect x="2.5" y="2.5" width="10" height="10" rx="1.5" fill="#d8ecfa" stroke=${BLUE}/><path d="M5 0v2.500M7.500 0v2.500M10 0v2.500M5 12.500V15M7.500 12.500V15M10 12.500V15M0 5h2.500M0 7.500h2.500M0 10h2.500M12.500 5H15M12.500 7.500H15M12.500 10H15" stroke=${BLUE}/>`)}Tester</span>
            </div>
          </div>
        </div>
      </div>
      <div class="bottom"></div>

      <div class="menu main">${this.menuItems(mainMenu)}</div>
      <div class="menu sub">${this.menuItems(subMenu)}</div>
      <div class="wm"><b>Activate Windows</b><span>Go to Settings to activate Windows.</span></div>
    `;
  }
}
